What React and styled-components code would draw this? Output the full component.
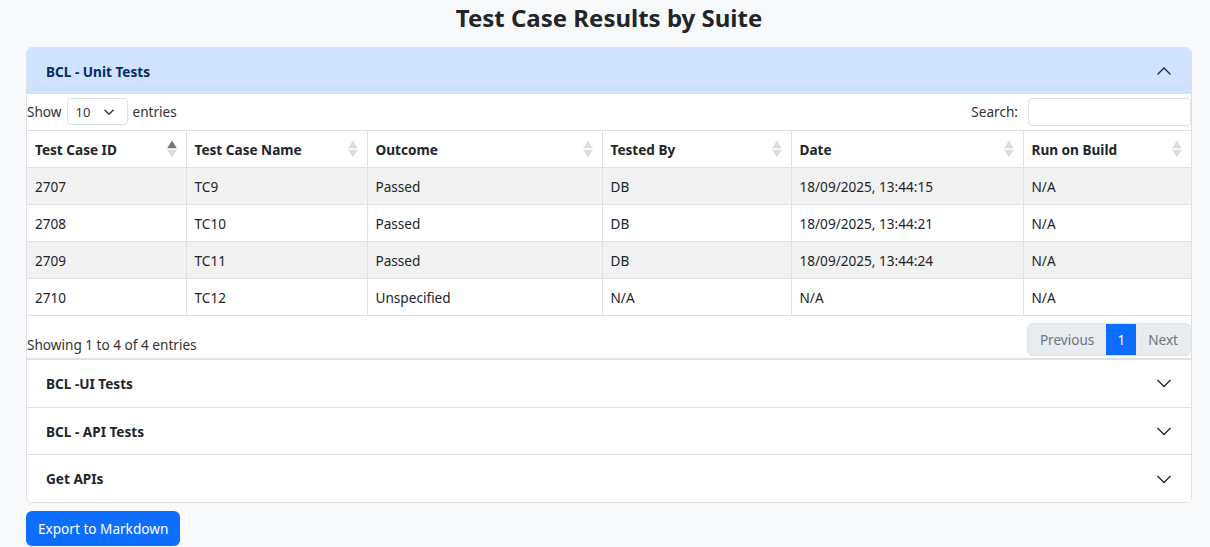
import React from "react";
import styled, { createGlobalStyle } from "styled-components";

const GlobalStyle = createGlobalStyle`
  html, body {
    margin: 0;
    padding: 0;
    background: #f8f9fa;
    font-family: "Segoe UI", "Noto Sans", "Liberation Sans", sans-serif;
    color: #212529;
    font-size: 13.6px;
  }
  * { box-sizing: border-box; }
`;

const Page = styled.div`
  padding: 0 18px 0 26px;
`;

const Title = styled.h1`
  margin: 0;
  padding-top: 1px;
  height: 47px;
  font-size: 24px;
  font-weight: 700;
  text-align: center;
  color: #212529;
`;

const Accordion = styled.div`
  border: 1px solid #dee2e6;
  border-radius: 6px;
  background: #fff;
  overflow: hidden;
`;

const Item = styled.div`
  & + & {
    border-top: 1px solid #dee2e6;
  }
`;

const ItemHeader = styled.div`
  display: flex;
  align-items: center;
  justify-content: space-between;
  height: ${(p) => (p.$open ? "46px" : "46.7px")};
  padding: 0 19px;
  font-weight: 700;
  background: ${(p) => (p.$open ? "#cfe2ff" : "#fff")};
  color: ${(p) => (p.$open ? "#052c65" : "#212529")};
`;

const Body = styled.div`
  background: #fff;
  border-bottom: 1px solid #dee2e6;
`;

const Controls = styled.div`
  display: flex;
  align-items: center;
  justify-content: space-between;
  height: 36px;
  padding-bottom: 1px;
`;

const Label = styled.label`
  display: flex;
  align-items: center;
  gap: 5px;
  color: #333;
`;

const SelectBox = styled.div`
  display: flex;
  align-items: center;
  justify-content: space-between;
  width: 61px;
  height: 27px;
  padding: 0 12px 0 8px;
  border: 1px solid #dee2e6;
  border-radius: 4px;
  font-size: 13px;
`;

const SearchInput = styled.input`
  width: 163px;
  height: 28px;
  border: 1px solid #dee2e6;
  border-radius: 4px;
  margin-left: 5px;
`;

const Table = styled.table`
  width: 100%;
  border-collapse: collapse;
`;

const Th = styled.th`
  position: relative;
  text-align: left;
  font-weight: 700;
  height: 37px;
  padding: 0 24px 0 8px;
  border: 1px solid #dee2e6;
  border-left: ${(p) => (p.$first ? "none" : "1px solid #dee2e6")};
  border-right: ${(p) => (p.$last ? "none" : "1px solid #dee2e6")};
  width: ${(p) => p.$w}px;
`;

const Td = styled.td`
  height: 37px;
  padding: 0 8px;
  border: 1px solid #dee2e6;
  border-left: ${(p) => (p.$first ? "none" : "1px solid #dee2e6")};
  border-right: ${(p) => (p.$last ? "none" : "1px solid #dee2e6")};
`;

const Tr = styled.tr`
  background: ${(p) => (p.$striped ? "#f2f2f2" : "#fff")};
`;

const SortIcon = styled.span`
  position: absolute;
  right: 9px;
  top: 50%;
  transform: translateY(-50%);
  display: flex;
  flex-direction: column;
  gap: 1px;
`;

const Footer = styled.div`
  display: flex;
  align-items: flex-start;
  justify-content: space-between;
  height: 42px;
  padding-top: 7px;
`;

const Info = styled.div`
  padding-top: 12px;
  color: #333;
`;

const Pager = styled.div`
  display: flex;
  height: 33px;
  border-radius: 6px;
  overflow: hidden;
  border: 1px solid #dee2e6;
  background: #e9ecef;
`;

const PageBtn = styled.div`
  display: flex;
  align-items: center;
  padding: 0 ${(p) => (p.$active ? "11px" : "12px")};
  color: ${(p) => (p.$active ? "#fff" : "#6c757d")};
  background: ${(p) => (p.$active ? "#0d6efd" : "transparent")};
`;

const ExportButton = styled.button`
  margin-top: 8px;
  height: 35px;
  padding: 0 12px;
  border: none;
  border-radius: 6px;
  background: #0d6efd;
  color: #fff;
  font-family: inherit;
  font-size: 13.6px;
`;

const Chevron = ({ up, color }) => (
  <svg width="16" height="16" viewBox="0 0 16 16" fill="none">
    <path
      d={up ? "M1.5 11.5 L8 5 L14.5 11.5" : "M1.5 5 L8 11.5 L14.5 5"}
      stroke={color}
      strokeWidth="1.3"
    />
  </svg>
);

const Sort = ({ active }) => (
  <SortIcon>
    <svg width="10" height="8" viewBox="0 0 10 8">
      <path d="M5 0 L10 8 L0 8 Z" fill={active ? "#777" : "#ddd"} />
    </svg>
    <svg width="10" height="8" viewBox="0 0 10 8">
      <path d="M0 0 L10 0 L5 8 Z" fill="#ddd" />
    </svg>
  </SortIcon>
);

const columns = [
  { name: "Test Case ID", w: 159 },
  { name: "Test Case Name", w: 181 },
  { name: "Outcome", w: 235 },
  { name: "Tested By", w: 189 },
  { name: "Date", w: 232 },
  { name: "Run on Build", w: 168 },
];

const rows = [
  ["2707", "TC9", "Passed", "DB", "18/09/2025, 13:44:15", "N/A"],
  ["2708", "TC10", "Passed", "DB", "18/09/2025, 13:44:21", "N/A"],
  ["2709", "TC11", "Passed", "DB", "18/09/2025, 13:44:24", "N/A"],
  ["2710", "TC12", "Unspecified", "N/A", "N/A", "N/A"],
];

const otherSuites = ["BCL -UI Tests", "BCL - API Tests", "Get APIs"];

export default function App() {
  return (
    <Page>
      <GlobalStyle />
      <Title>Test Case Results by Suite</Title>
      <Accordion>
        <Item>
          <ItemHeader $open>
            <span>BCL - Unit Tests</span>
            <Chevron up color="#052c65" />
          </ItemHeader>
          <Body>
            <Controls>
              <Label>
                Show
                <SelectBox>
                  <span>10</span>
                  <svg width="12" height="12" viewBox="0 0 16 16">
                    <path d="M2 5 L8 11 L14 5" stroke="#343a40" strokeWidth="2" fill="none" />
                  </svg>
                </SelectBox>
                entries
              </Label>
              <Label>
                Search:
                <SearchInput />
              </Label>
            </Controls>
            <Table>
              <thead>
                <tr>
                  {columns.map((c, i) => (
                    <Th key={c.name} $w={c.w} $first={i === 0} $last={i === columns.length - 1}>
                      {c.name}
                      <Sort active={i === 0} />
                    </Th>
                  ))}
                </tr>
              </thead>
              <tbody>
                {rows.map((r, ri) => (
                  <Tr key={r[0]} $striped={ri % 2 === 0}>
                    {r.map((v, i) => (
                      <Td key={i} $first={i === 0} $last={i === r.length - 1}>
                        {v}
                      </Td>
                    ))}
                  </Tr>
                ))}
              </tbody>
            </Table>
            <Footer>
              <Info>Showing 1 to 4 of 4 entries</Info>
              <Pager>
                <PageBtn>Previous</PageBtn>
                <PageBtn $active>1</PageBtn>
                <PageBtn>Next</PageBtn>
              </Pager>
            </Footer>
          </Body>
        </Item>
        {otherSuites.map((s) => (
          <Item key={s}>
            <ItemHeader>
              <span>{s}</span>
              <Chevron color="#212529" />
            </ItemHeader>
          </Item>
        ))}
      </Accordion>
      <ExportButton>Export to Markdown</ExportButton>
    </Page>
  );
}
